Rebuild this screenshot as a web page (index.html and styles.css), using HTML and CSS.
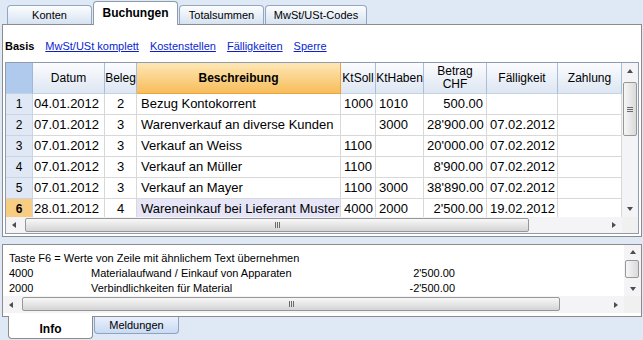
FILE: index.html
```html
<!doctype html>
<html>
<head>
<meta charset="utf-8">
<title>Buchungen</title>
<link rel="stylesheet" href="styles.css">
</head>
<body>

<div class="tabs-top">
	<div class="tab">Konten</div>
	<div class="tab active">Buchungen</div>
	<div class="tab">Totalsummen</div>
	<div class="tab wide">MwSt/USt-Codes</div>
</div>

<div class="panel main">
	<div class="subnav">
		<b>Basis</b>
		<a href="#">MwSt/USt komplett</a>
		<a href="#">Kostenstellen</a>
		<a href="#">Fälligkeiten</a>
		<a href="#">Sperre</a>
	</div>

	<div class="grid">
		<div class="view">
			<table class="book">
				<colgroup>
					<col class="c-nr"><col class="c-dat"><col class="c-bel"><col class="c-txt"><col class="c-soll">
					<col class="c-haben"><col class="c-betr"><col class="c-fall"><col class="c-zahl">
				</colgroup>
				<tr>
					<th class="nr"></th>
					<th>Datum</th>
					<th>Beleg</th>
					<th class="sel">Beschreibung</th>
					<th>KtSoll</th>
					<th>KtHaben</th>
					<th class="two">Betrag<br>CHF</th>
					<th>Fälligkeit</th>
					<th>Zahlung</th>
				</tr>
				<tr>
					<td class="nr">1</td><td class="dat">04.01.2012</td><td class="bel">2</td><td class="txt">Bezug Kontokorrent</td>
					<td class="kt">1000</td><td class="kt">1010</td><td class="betr">500.00</td><td class="fall"></td><td></td>
				</tr>
				<tr>
					<td class="nr">2</td><td class="dat">07.01.2012</td><td class="bel">3</td><td class="txt">Warenverkauf an diverse Kunden</td>
					<td class="kt"></td><td class="kt">3000</td><td class="betr">28'900.00</td><td class="fall">07.02.2012</td><td></td>
				</tr>
				<tr>
					<td class="nr">3</td><td class="dat">07.01.2012</td><td class="bel">3</td><td class="txt">Verkauf an Weiss</td>
					<td class="kt">1100</td><td class="kt"></td><td class="betr">20'000.00</td><td class="fall">07.02.2012</td><td></td>
				</tr>
				<tr>
					<td class="nr">4</td><td class="dat">07.01.2012</td><td class="bel">3</td><td class="txt">Verkauf an Müller</td>
					<td class="kt">1100</td><td class="kt"></td><td class="betr">8'900.00</td><td class="fall">07.02.2012</td><td></td>
				</tr>
				<tr>
					<td class="nr">5</td><td class="dat">07.01.2012</td><td class="bel">3</td><td class="txt">Verkauf an Mayer</td>
					<td class="kt">1100</td><td class="kt">3000</td><td class="betr">38'890.00</td><td class="fall">07.02.2012</td><td></td>
				</tr>
				<tr class="current">
					<td class="nr">6</td><td class="dat">28.01.2012</td><td class="bel">4</td><td class="txt">Wareneinkauf bei Lieferant Muster</td>
					<td class="kt">4000</td><td class="kt">2000</td><td class="betr">2'500.00</td><td class="fall">19.02.2012</td><td></td>
				</tr>
			</table>
		</div>
		<div class="vscroll">
			<div class="arrow"><span class="up"></span></div>
			<div class="thumb v" style="margin-top:3px;height:54px"></div>
			<div class="fill"></div>
			<div class="arrow"><span class="down"></span></div>
		</div>
		<div class="hscroll">
			<div class="arrow"><span class="left"></span></div>
			<div class="thumb h" style="width:504px"></div>
			<div class="fill"></div>
			<div class="arrow"><span class="right"></span></div>
		</div>
		<div class="corner"></div>
	</div>
</div>

<div class="panel info">
	<div class="view">
		<div class="line full">Taste F6 = Werte von Zeile mit ähnlichem Text übernehmen</div>
		<div class="line"><span>4000</span><span>Materialaufwand / Einkauf von Apparaten</span><span class="amt">2'500.00</span></div>
		<div class="line"><span>2000</span><span>Verbindlichkeiten für Material</span><span class="amt">-2'500.00</span></div>
	</div>
	<div class="vscroll">
		<div class="arrow small"><span class="up"></span></div>
		<div class="thumb v" style="margin-top:1px;height:18px"></div>
		<div class="fill"></div>
		<div class="arrow small"><span class="down"></span></div>
	</div>
	<div class="hscroll">
		<div class="arrow"><span class="left"></span></div>
		<div class="thumb h" style="width:538px"></div>
		<div class="fill"></div>
		<div class="arrow"><span class="right"></span></div>
	</div>
	<div class="corner"></div>
</div>

<div class="tabs-bottom">
	<div class="tab active">Info</div>
	<div class="tab">Meldungen</div>
</div>

</body>
</html>
```

FILE: styles.css
```css
body
{
	margin: 0;
	width: 643px;
	height: 340px;
	overflow: hidden;
	background: #dfe9f5;
	font-family: "Liberation Sans", Arial, sans-serif;
	font-size: 11px;
	color: #000;
}

/* top tabs */
.tabs-top
{
	display: flex;
	align-items: flex-end;
	gap: 1px;
	height: 24px;
	padding-left: 7px;
	position: relative;
	z-index: 1;
}
.tabs-top .tab
{
	box-sizing: border-box;
	width: 85px;
	height: 19px;
	border: 1px solid #93a7c2;
	border-bottom: none;
	border-radius: 4px 4px 0 0;
	background: linear-gradient(#fcfdfe, #d6e2f2);
	text-align: center;
	font-size: 11px;
	line-height: 19px;
}
.tabs-top .tab.wide
{
	width: 102px;
}
.tabs-top .tab.active
{
	height: 24px;
	margin-bottom: -1px;
	border-color: #8d9bad;
	background: #fff;
	font-weight: bold;
	font-size: 12px;
	line-height: 22px;
}

/* panels */
.panel
{
	box-sizing: border-box;
	width: 640px;
	margin-left: 2px;
	border: 1px solid #8c8c8c;
	background: #fff;
}
.main
{
	height: 213px;
	padding: 0 2px 2px 2px;
}
.subnav
{
	display: flex;
	gap: 11px;
	height: 37px;
	padding-top: 14px;
	box-sizing: border-box;
	line-height: 14px;
	font-size: 11px;
}
.subnav a
{
	color: #0a1fd0;
	text-decoration: underline;
}

/* booking grid */
.grid
{
	box-sizing: border-box;
	width: 634px;
	height: 172px;
	border: 1px solid #8e9cae;
	display: grid;
	grid-template-columns: 616px 16px;
	grid-template-rows: 154px 16px;
}
.view
{
	overflow: hidden;
	background: #fff;
}
.book
{
	width: 616px;
	table-layout: fixed;
	border-collapse: separate;
	border-spacing: 0;
}
.c-nr { width: 27px; }
.c-dat { width: 72px; }
.c-bel { width: 32px; }
.c-txt { width: 204px; }
.c-soll { width: 35px; }
.c-haben { width: 48px; }
.c-betr { width: 63px; }
.c-fall { width: 71px; }
.c-zahl { width: 64px; }

.book th
{
	box-sizing: border-box;
	height: 31px;
	padding: 0;
	border-right: 1px solid #a9bfd9;
	border-bottom: 1px solid #c4d2e3;
	background: linear-gradient(#fbfcfe, #dde6f2);
	font-size: 12px;
	font-weight: normal;
	line-height: 14px;
	text-align: center;
	vertical-align: middle;
	white-space: nowrap;
	overflow: hidden;
}
.book th.nr
{
	background: #b0caee;
	border-right-color: #9fb8da;
}
.book th.sel
{
	background: linear-gradient(#fde7b6, #f8bd5b);
	border-right-color: #f0a23c;
	border-bottom-color: #f0a23c;
	font-weight: bold;
}
.book th.two
{
	line-height: 13px;
}
.book td
{
	box-sizing: border-box;
	height: 21px;
	padding: 0 3px;
	border-right: 1px solid #d8d8d8;
	border-bottom: 1px solid #d8d8d8;
	font-size: 13px;
	line-height: 20px;
	white-space: nowrap;
	overflow: hidden;
}
.book td.nr
{
	padding: 0;
	background: #dfe8f4;
	border-right-color: #c9d5e4;
	border-bottom-color: #c9d5e4;
	font-size: 12px;
	text-align: center;
}
.book td.dat { padding-left: 1px; }
.book td.bel { text-align: center; }
.book td.txt { padding-left: 4px; text-overflow: clip; }
.book td.kt { padding-left: 3px; }
.book td.betr { text-align: right; padding-right: 3px; }
.book td.fall { padding-left: 3px; }
.book tr.current td.nr
{
	background: #f9cc84;
	font-weight: bold;
}
.book tr.current td.txt
{
	background: #e5e5f7;
}

/* scrollbars */
.vscroll,
.hscroll
{
	display: flex;
	background: #f4f4f6;
}
.vscroll
{
	flex-direction: column;
}
.fill
{
	flex: 1;
}
.arrow
{
	flex: 0 0 16px;
	width: 16px;
	height: 16px;
	display: flex;
	align-items: center;
	justify-content: center;
}
.arrow.small
{
	flex-basis: 14px;
	height: 14px;
	width: 17px;
}
.arrow span
{
	width: 0;
	height: 0;
	border: 3px solid transparent;
}
.arrow .up { border-bottom: 4px solid #4d4d4d; border-top-width: 0; }
.arrow .down { border-top: 4px solid #4d4d4d; border-bottom-width: 0; }
.arrow .left { border-right: 4px solid #4d4d4d; border-left-width: 0; }
.arrow .right { border-left: 4px solid #4d4d4d; border-right-width: 0; }

.thumb
{
	box-sizing: border-box;
	border: 1px solid #979797;
	border-radius: 2px;
	display: flex;
	align-items: center;
	justify-content: center;
}
.thumb.v
{
	width: 14px;
	margin-left: 1px;
	background: linear-gradient(to right, #f6f6f6, #dadada);
}
.thumb.h
{
	height: 14px;
	margin: 1px 0 0 3px;
	background: linear-gradient(#f8f8f8, #d4d4d4);
}
.main .thumb.v::after
{
	content: "";
	width: 6px;
	height: 5px;
	background: repeating-linear-gradient(#6a6a6a 0 1px, transparent 1px 2px);
}
.thumb.h::after
{
	content: "";
	width: 5px;
	height: 6px;
	background: repeating-linear-gradient(90deg, #6a6a6a 0 1px, transparent 1px 2px);
}
.corner
{
	background: #f0f0f0;
}

/* info panel */
.info
{
	height: 73px;
	margin-top: 7px;
	padding-bottom: 3px;
	display: grid;
	grid-template-columns: 621px 17px;
	grid-template-rows: 51px 17px;
}
.info .view
{
	padding: 6px 0 0 6px;
	box-sizing: border-box;
}
.line
{
	display: grid;
	grid-template-columns: 82px 220px 144px;
	line-height: 15px;
	font-size: 11px;
	white-space: nowrap;
}
.line.full
{
	display: block;
}
.line .amt
{
	text-align: right;
}
.info .hscroll
{
	height: 17px;
}
.info .arrow
{
	height: 17px;
}

/* bottom tabs */
.tabs-bottom
{
	display: flex;
	align-items: flex-start;
	gap: 1px;
	padding-left: 8px;
	position: relative;
	z-index: 1;
}
.tabs-bottom .tab
{
	box-sizing: border-box;
	width: 85px;
	height: 17px;
	border: 1px solid #8ea3c2;
	border-top: none;
	border-radius: 0 0 4px 4px;
	background: linear-gradient(#e9f0fc, #c9daf3);
	text-align: center;
	font-size: 11px;
	line-height: 16px;
}
.tabs-bottom .tab.active
{
	height: 23px;
	margin-top: -1px;
	border-color: #8c8c8c;
	background: #fff;
	font-weight: bold;
	font-size: 12px;
	line-height: 26px;
}
```
